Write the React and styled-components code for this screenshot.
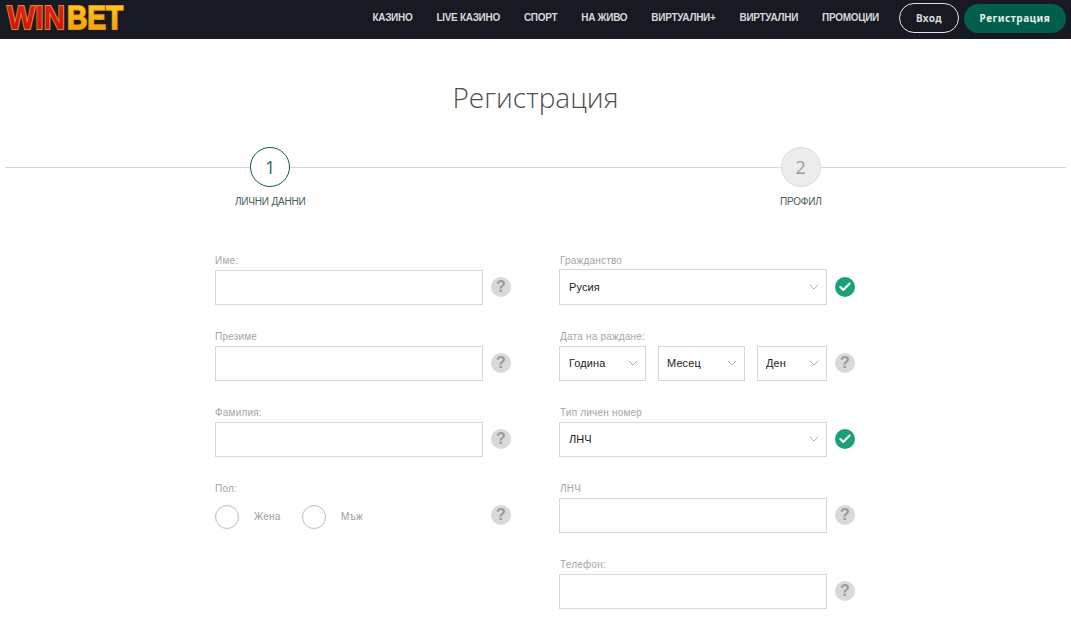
import React from "react";
import styled, { createGlobalStyle } from "styled-components";
import { ChevronDown, Check } from "lucide-react";

const Global = createGlobalStyle`
  html, body { margin: 0; padding: 0; background: #fff; overflow: hidden; }
  * { box-sizing: border-box; }
  body { font-family: "Liberation Sans", Arial, sans-serif; }
`;

const Header = styled.header`
  height: 39px;
  background: #171a23;
  display: flex;
  align-items: flex-start;
  justify-content: space-between;
  padding: 3px 5px 0 5px;
`;
const LogoSvg = styled.svg`
  display: block;
  width: 122px;
  height: 30px;
  overflow: visible;
  text {
    font: bold 33px "Liberation Sans", sans-serif;
    paint-order: stroke;
    stroke: #e8891c;
    stroke-width: 2px;
    stroke-linejoin: miter;
  }
`;
const HeaderRight = styled.div`
  display: flex;
  align-items: center;
`;
const Nav = styled.nav`
  display: flex;
  gap: 24px;
  margin-right: 20px;
`;
const NavLink = styled.a`
  color: #d4d6da;
  font: bold 10px/28px "Liberation Sans", sans-serif;
  letter-spacing: -0.3px;
  white-space: nowrap;
`;
const LoginButton = styled.button`
  width: 60px;
  height: 30px;
  border: 1px solid #e4e5e7;
  border-radius: 15px;
  background: transparent;
  color: #d8dadd;
  font: bold 10px "Noto Sans", sans-serif;
  letter-spacing: 0.4px;
  padding: 0;
  margin-right: 5px;
`;
const RegisterButton = styled.button`
  width: 102px;
  height: 29px;
  border: 0;
  border-radius: 15px;
  background: #035f4d;
  color: #e6f0ec;
  font: bold 10px "Noto Sans", sans-serif;
  letter-spacing: 0.5px;
  padding: 0;
`;

const Title = styled.h1`
  margin: 39px 0 0;
  text-align: center;
  font: 300 28px/38px "Open Sans", sans-serif;
  color: #4a504d;
`;

const Stepper = styled.div`
  position: relative;
  display: flex;
  margin: 31px 5px 0;
  &::before {
    content: "";
    position: absolute;
    left: 0;
    right: 0;
    top: 20px;
    height: 1px;
    background: #d4d6d5;
  }
`;
const Step = styled.div`
  flex: 1;
  display: flex;
  flex-direction: column;
  align-items: center;
  position: relative;
`;
const StepCircle = styled.div`
  width: 40px;
  height: 40px;
  border-radius: 50%;
  border: 1px solid ${(p) => (p.$active ? "#0b5c4c" : "#dcdcdc")};
  background: ${(p) => (p.$active ? "#fff" : "#ececec")};
  color: ${(p) => (p.$active ? "#2f6a5c" : "#9a9a9a")};
  display: flex;
  align-items: center;
  justify-content: center;
  font: 400 18px "Open Sans", sans-serif;
`;
const StepLabel = styled.div`
  margin-top: 9px;
  font: 10px/12px "Liberation Sans", sans-serif;
  color: #44605a;
  letter-spacing: -0.2px;
`;

const Form = styled.form`
  display: flex;
  justify-content: center;
  gap: 48px;
  margin-top: 47px;
  padding-right: 1px;
`;
const Label = styled.div`
  font: 10px/12px "Liberation Sans", sans-serif;
  letter-spacing: 0.2px;
  color: #a5a5a5;
  height: 12px;
  margin-bottom: 2px;
  padding-left: ${(p) => (p.$inset ? "1px" : "0")};
`;
const Column = styled.div`
  width: 296px;
  display: flex;
  flex-direction: column;
`;
const Field = styled.div`
  height: 76px;
  flex: none;
`;
const Row = styled.div`
  display: flex;
  align-items: center;
  justify-content: space-between;
  height: 36px;
`;
const TextInput = styled.input`
  width: 268px;
  height: 35px;
  border: 1px solid #d6d6d6;
  background: #fff;
  outline: none;
`;
const SelectWrap = styled.div`
  position: relative;
  width: ${(p) => p.$w}px;
  height: ${(p) => p.$h || 35}px;
  svg {
    position: absolute;
    right: 5px;
    top: 50%;
    transform: translateY(-50%);
    color: #8f8f8f;
    pointer-events: none;
  }
`;
const Select = styled.select`
  appearance: none;
  width: 100%;
  height: 100%;
  border: 1px solid #d6d6d6;
  border-radius: 0;
  background: #fff;
  padding: 0 0 0 ${(p) => p.$pad}px;
  font: 11px "Liberation Sans", sans-serif;
  letter-spacing: 0.1px;
  color: #222;
  outline: none;
`;
const DateGroup = styled.div`
  display: flex;
  gap: 12px;
`;
const Help = styled.div`
  width: 20px;
  height: 20px;
  border-radius: 50%;
  background: #d9d9d9;
  color: #999;
  display: flex;
  align-items: center;
  justify-content: center;
  font: bold 16px "Liberation Sans", sans-serif;
`;
const Valid = styled.div`
  width: 20px;
  height: 20px;
  border-radius: 50%;
  background: #1ba179;
  color: #fff;
  display: flex;
  align-items: center;
  justify-content: center;
`;
const RadioGroup = styled.div`
  display: flex;
  align-items: center;
  margin-top: 3px;
`;
const RadioCircle = styled.span`
  width: 24px;
  height: 24px;
  border-radius: 50%;
  border: 1px solid #bdbdbd;
  background: #fff;
`;
const RadioText = styled.span`
  font: 10px "Liberation Sans", sans-serif;
  letter-spacing: 0.2px;
  color: #9c9c9c;
  margin-left: 15px;
  width: 48px;
`;

const SelectField = ({ w, value, h, pad = 9 }) => (
  <SelectWrap $w={w} $h={h}>
    <Select defaultValue={value} $pad={pad}>
      <option>{value}</option>
    </Select>
    <ChevronDown size={16} strokeWidth={1.1} />
  </SelectWrap>
);
const TextField = ({ label, inset }) => (
  <Field>
    <Label $inset={inset}>{label}</Label>
    <Row>
      <TextInput />
      <Help>?</Help>
    </Row>
  </Field>
);
const ValidIcon = () => (
  <Valid>
    <Check size={14} strokeWidth={3.6} />
  </Valid>
);
const Logo = () => (
  <LogoSvg viewBox="0 0 122 30" role="img" aria-label="WINBET">
    <defs>
      <linearGradient id="logoRed" x1="0" y1="0" x2="0" y2="1">
        <stop offset="0" stopColor="#e8221a" />
        <stop offset="1" stopColor="#c8100f" />
      </linearGradient>
      <linearGradient id="logoGold" x1="0" y1="0" x2="0" y2="1">
        <stop offset="0" stopColor="#ffd21c" />
        <stop offset="1" stopColor="#e99a07" />
      </linearGradient>
    </defs>
    <text x="2" y="26" fill="url(#logoRed)" textLength="58" lengthAdjust="spacingAndGlyphs">WIN</text>
    <text x="62" y="26" fill="url(#logoGold)" textLength="56" lengthAdjust="spacingAndGlyphs">BET</text>
  </LogoSvg>
);

export default function App() {
  return (
    <>
      <Global />
      <Header>
        <Logo />
        <HeaderRight>
          <Nav>
            {["КАЗИНО", "LIVE КАЗИНО", "СПОРТ", "НА ЖИВО", "ВИРТУАЛНИ+", "ВИРТУАЛНИ", "ПРОМОЦИИ"].map((t) => (
              <NavLink key={t}>{t}</NavLink>
            ))}
          </Nav>
          <LoginButton type="button">Вход</LoginButton>
          <RegisterButton type="button">Регистрация</RegisterButton>
        </HeaderRight>
      </Header>
      <Title>Регистрация</Title>
      <Stepper>
        <Step>
          <StepCircle $active>1</StepCircle>
          <StepLabel>ЛИЧНИ ДАННИ</StepLabel>
        </Step>
        <Step>
          <StepCircle>2</StepCircle>
          <StepLabel>ПРОФИЛ</StepLabel>
        </Step>
      </Stepper>
      <Form>
        <Column>
          <TextField label="Име:" />
          <TextField label="Презиме" />
          <TextField label="Фамилия:" />
          <Field>
            <Label>Пол:</Label>
            <Row>
              <RadioGroup>
                <RadioCircle />
                <RadioText>Жена</RadioText>
                <RadioCircle />
                <RadioText>Мъж</RadioText>
              </RadioGroup>
              <Help>?</Help>
            </Row>
          </Field>
        </Column>
        <Column>
          <Field>
            <Label $inset>Гражданство</Label>
            <Row>
              <SelectField w={268} h={36} value="Русия" />
              <ValidIcon />
            </Row>
          </Field>
          <Field>
            <Label $inset>Дата на раждане:</Label>
            <Row>
              <DateGroup>
                <SelectField w={87} value="Година" />
                <SelectField w={87} value="Месец" pad={8} />
                <SelectField w={70} value="Ден" pad={8} />
              </DateGroup>
              <Help>?</Help>
            </Row>
          </Field>
          <Field>
            <Label $inset>Тип личен номер</Label>
            <Row>
              <SelectField w={268} value="ЛНЧ" />
              <ValidIcon />
            </Row>
          </Field>
          <TextField inset label="ЛНЧ" />
          <TextField inset label="Телефон:" />
        </Column>
      </Form>
    </>
  );
}
